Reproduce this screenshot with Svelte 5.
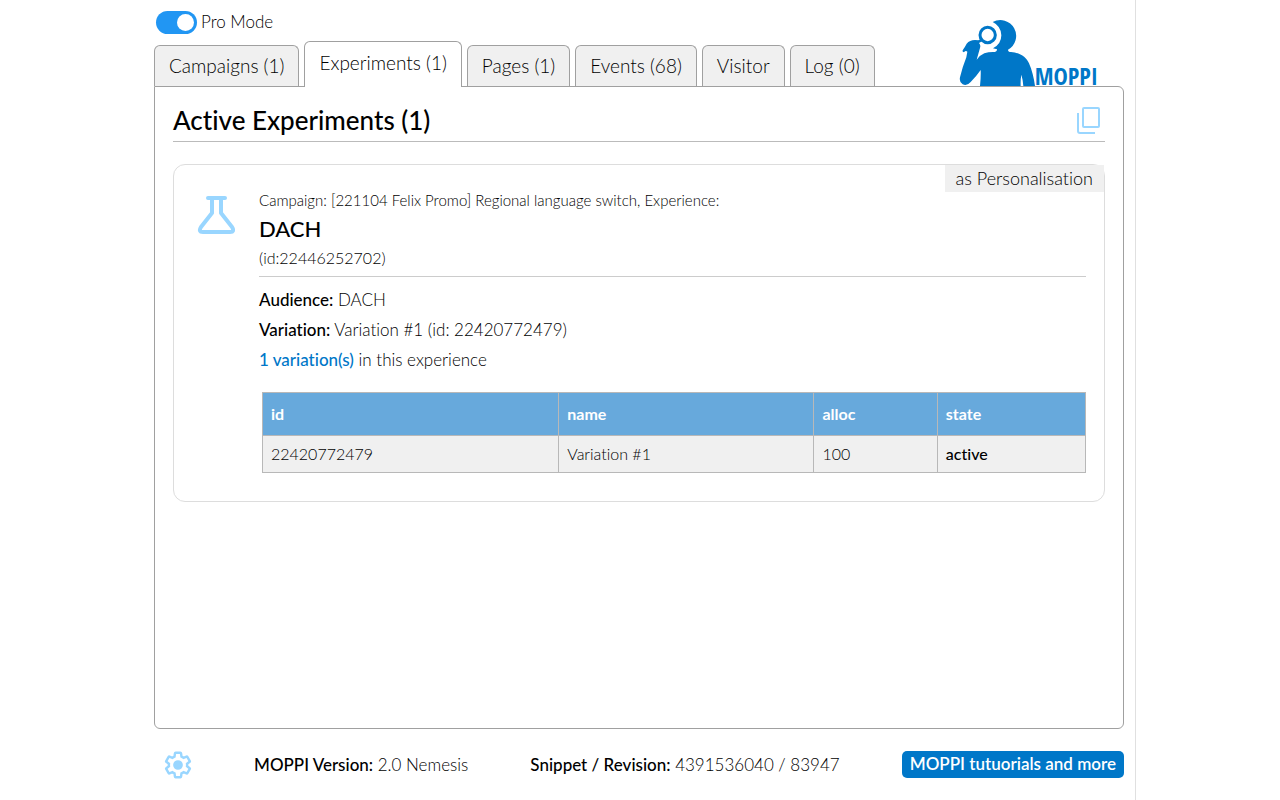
<script lang="ts">
	const tabs = [
		{ id: 'campaigns', label: 'Campaigns (1)' },
		{ id: 'experiments', label: 'Experiments (1)' },
		{ id: 'pages', label: 'Pages (1)' },
		{ id: 'events', label: 'Events (68)' },
		{ id: 'visitor', label: 'Visitor' },
		{ id: 'log', label: 'Log (0)' }
	];

	const variations = [{ id: '22420772479', name: 'Variation #1', alloc: 100, state: 'active' }];

	let active = $state('experiments');
	let proMode = $state(true);
</script>

<div class="app">
	<header>
		<div class="nav">
			<label class="pro-mode">
				<input type="checkbox" bind:checked={proMode} />
				Pro Mode
			</label>
			<div class="tabs" role="tablist">
				{#each tabs as tab (tab.id)}
					<button
						type="button"
						role="tab"
						class:active={active === tab.id}
						aria-selected={active === tab.id}
						onclick={() => (active = tab.id)}
					>
						{tab.label}
					</button>
				{/each}
			</div>
		</div>
		<div class="logo">
			<svg viewBox="56 24 228 204" aria-hidden="true">
				<path
					d="M157 36 A47 47 0 1 1 203 119 Q203 126 212 126 C240 128 258 142 266 160 C275 180 281 205 284 228 H249 Q248 210 243 194 Q240 210 241 228 H119 Q122 200 121 180 Q108 199 91 216 Q80 229 67 223 Q56 216 59 202 Q66 172 78 142 L81 125 Q76 120 71 127 Q64 125 68 119 Q75 109 79 101 Q88 90 104 90 L114 91 L122 87 L126 93 L116 99 Q122 105 119 114 L109 149 Q118 136 132 130 Q146 125 164 126 Q171 124 170 118 L158 115 Q183 102 183 76 Q182 48 157 36 Z"
				/>
				<circle cx="142" cy="75" r="23" />
			</svg>
			<span>MOPPI</span>
		</div>
	</header>

	<main>
		<div class="title">
			<h1>Active Experiments (1)</h1>
			<button type="button" class="icon" aria-label="Copy">
				<svg width="24" height="30" viewBox="0 0 24 30">
					<rect x="6" y="3" width="16" height="19" rx="1" />
					<path d="M1 8V26Q1 28 3 28H18" />
				</svg>
			</button>
		</div>

		<article>
			<span class="tag">as Personalisation</span>
			<svg class="flask" viewBox="0 0 38 38" aria-hidden="true">
				<path d="M11 2H28M15 2V17L4 31Q1 36 6 36H33Q38 36 35 31L24 17V2" />
			</svg>
			<div class="details">
				<p class="campaign">Campaign: [221104 Felix Promo] Regional language switch, Experience:</p>
				<h2>DACH</h2>
				<p class="id">(id:22446252702)</p>
				<hr />
				<p><b>Audience:</b> DACH</p>
				<p><b>Variation:</b> Variation #1 (id: 22420772479)</p>
				<p><a href="#variations">1 variation(s)</a> in this experience</p>
				<table id="variations">
					<thead>
						<tr>
							<th class="col-id">id</th>
							<th class="col-name">name</th>
							<th class="col-alloc">alloc</th>
							<th>state</th>
						</tr>
					</thead>
					<tbody>
						{#each variations as row (row.id)}
							<tr>
								<td>{row.id}</td>
								<td>{row.name}</td>
								<td>{row.alloc}</td>
								<td><b>{row.state}</b></td>
							</tr>
						{/each}
					</tbody>
				</table>
			</div>
		</article>
	</main>

	<footer>
		<button type="button" class="icon" aria-label="Settings">
			<svg class="gear" width="28" height="28" viewBox="0.5 0.5 23 23">
				<path
					d="M19.43 12.98c.04-.32.07-.64.07-.98s-.03-.66-.07-.98l2.11-1.65c.19-.15.24-.42.12-.64l-2-3.46c-.09-.16-.26-.25-.44-.25-.06 0-.12.01-.17.03l-2.49 1c-.52-.4-1.08-.73-1.69-.98l-.38-2.65C14.46 2.18 14.25 2 14 2h-4c-.25 0-.46.18-.49.42l-.38 2.65c-.61.25-1.17.59-1.69.98l-2.49-1c-.06-.02-.12-.03-.18-.03-.17 0-.34.09-.43.25l-2 3.46c-.13.22-.07.49.12.64l2.11 1.65c-.04.32-.07.65-.07.98s.03.66.07.98l-2.11 1.65c-.19.15-.24.42-.12.64l2 3.46c.09.16.26.25.44.25.06 0 .12-.01.17-.03l2.49-1c.52.4 1.08.73 1.69.98l.38 2.65c.03.24.24.42.49.42h4c.25 0 .46-.18.49-.42l.38-2.65c.61-.25 1.17-.59 1.69-.98l2.49 1c.06.02.12.03.18.03.17 0 .34-.09.43-.25l2-3.46c.12-.22.07-.49-.12-.64l-2.11-1.65z"
				/>
				<circle cx="12" cy="12" r="3" />
			</svg>
		</button>
		<span><b>MOPPI Version:</b> 2.0 Nemesis</span>
		<span><b>Snippet / Revision:</b> 4391536040 / 83947</span>
		<a class="tutorials" href="#tutorials">MOPPI tutuorials and more</a>
	</footer>
</div>

<style>
	:global(body) {
		margin: 0;
		background: #fff;
	}

	.app {
		--blue: #0077c8;
		--light-blue: #99d6ff;
		--line: #a0a0a0;

		display: flex;
		flex-direction: column;
		box-sizing: border-box;
		max-width: 992px;
		min-height: 100vh;
		margin: 0 auto;
		padding: 0 11px 0 10px;
		border-right: 1px solid #e0e0e0;
		color: #000;
		font: 300 17px/24px Lato, sans-serif;
		font-variant-ligatures: none;
	}

	h1,
	h2,
	p {
		margin: 0;
	}

	b,
	h1,
	h2,
	th {
		font-weight: 500;
	}

	button {
		font: inherit;
		color: inherit;
		cursor: pointer;
	}

	header {
		display: flex;
		justify-content: space-between;
		align-items: flex-end;
	}

	.pro-mode {
		display: flex;
		align-items: center;
		gap: 4px;
		height: 24px;
		margin: 10px 0 7px 2px;

		input {
			appearance: none;
			width: 41px;
			height: 23px;
			margin: 0;
			border-radius: 12px;
			background: #ccc;

			&::before {
				content: '';
				display: block;
				width: 17px;
				height: 17px;
				margin: 3px;
				border-radius: 50%;
				background: #fff;
			}

			&:checked {
				background: #2196f3;
			}

			&:checked::before {
				margin-left: 21px;
			}
		}
	}

	.tabs {
		display: flex;
		align-items: flex-end;
		gap: 5px;

		button {
			height: 41px;
			padding: 0 14px;
			border: 1px solid var(--line);
			border-bottom: 0;
			border-radius: 6px 6px 0 0;
			background: #f0f0f0;
			font-size: 19px;
			white-space: nowrap;
		}

		.active {
			z-index: 1;
			height: 46px;
			margin-bottom: -1px;
			padding-bottom: 4px;
			background: #fff;
		}
	}

	.logo {
		display: flex;
		align-items: flex-end;
		margin-right: 26px;
		color: var(--blue);

		svg {
			display: block;
			width: 76px;
			height: 68px;
			fill: currentColor;
		}

		circle {
			fill: #fff;
			stroke: currentColor;
			stroke-width: 9;
		}

		span {
			font-family: 'Noto Sans ExtraCondensed', 'Open Sans Condensed', 'Noto Sans Condensed', 'Roboto Condensed', Roboto, sans-serif;
			font-size: 24px;
			font-weight: 900;
			line-height: 20px;
		}
	}

	main {
		flex: 1;
		padding: 18px;
		border: 1px solid var(--line);
		border-radius: 0 6px 6px 6px;
	}

	.title {
		display: flex;
		justify-content: space-between;
		align-items: flex-start;
		height: 36px;
		padding-right: 4px;
		border-bottom: 1px solid #bbb;
	}

	h1 {
		font-size: 26px;
		line-height: 30px;
	}

	.icon {
		padding: 0;
		border: 0;
		background: none;

		svg {
			display: block;
			overflow: visible;
			fill: none;
			stroke: var(--light-blue);
			stroke-width: 2;
		}

		.gear circle {
			fill: var(--light-blue);
		}
	}

	article {
		position: relative;
		display: flex;
		gap: 24px;
		margin-top: 22px;
		padding: 23px 18px 28px 23px;
		border: 1px solid #ddd;
		border-radius: 12px;
	}

	.tag {
		position: absolute;
		top: 0;
		right: 0;
		padding: 1px 11px 2px;
		background: #f0f0f0;
		font-size: 18px;
	}

	.flask {
		flex-shrink: 0;
		width: 38px;
		height: 38px;
		margin-top: 8px;
		fill: none;
		stroke: var(--light-blue);
		stroke-width: 4;
		stroke-linecap: round;
		stroke-linejoin: round;
	}

	.details {
		flex: 1;

		p {
			margin-bottom: 6px;
		}

		.campaign {
			margin-bottom: 3px;
			font-size: 15px;
		}

		.id {
			font-size: 16px;
		}
	}

	h2 {
		font-size: 22px;
		line-height: 28px;
		margin-bottom: 3px;
	}

	hr {
		margin: 0 0 11px;
		border: 0;
		border-top: 1px solid #ccc;
	}

	a {
		color: var(--blue);
		font-weight: 500;
		text-decoration: none;
	}

	table {
		width: calc(100% - 3px);
		margin: 20px 0 0 3px;
		border-collapse: collapse;
		table-layout: fixed;
		font-size: 16px;
		text-align: left;
	}

	th,
	td {
		box-sizing: border-box;
		padding: 6px 8px;
		border: 1px solid #b8b8b8;
	}

	th {
		padding: 9px 8px;
		background: #67a9dc;
		color: #fff;
		font-weight: 700;
	}

	td {
		background: #f0f0f0;
	}

	.col-id {
		width: 36%;
	}

	.col-name {
		width: 31%;
	}

	.col-alloc {
		width: 15%;
	}

	footer {
		display: flex;
		justify-content: space-between;
		align-items: center;
		height: 71px;
		padding-left: 10px;
	}

	.tutorials {
		padding: 1px 8px 2px;
		border-radius: 5px;
		background: var(--blue);
		color: #fff;
		font-weight: 600;
	}
</style>
